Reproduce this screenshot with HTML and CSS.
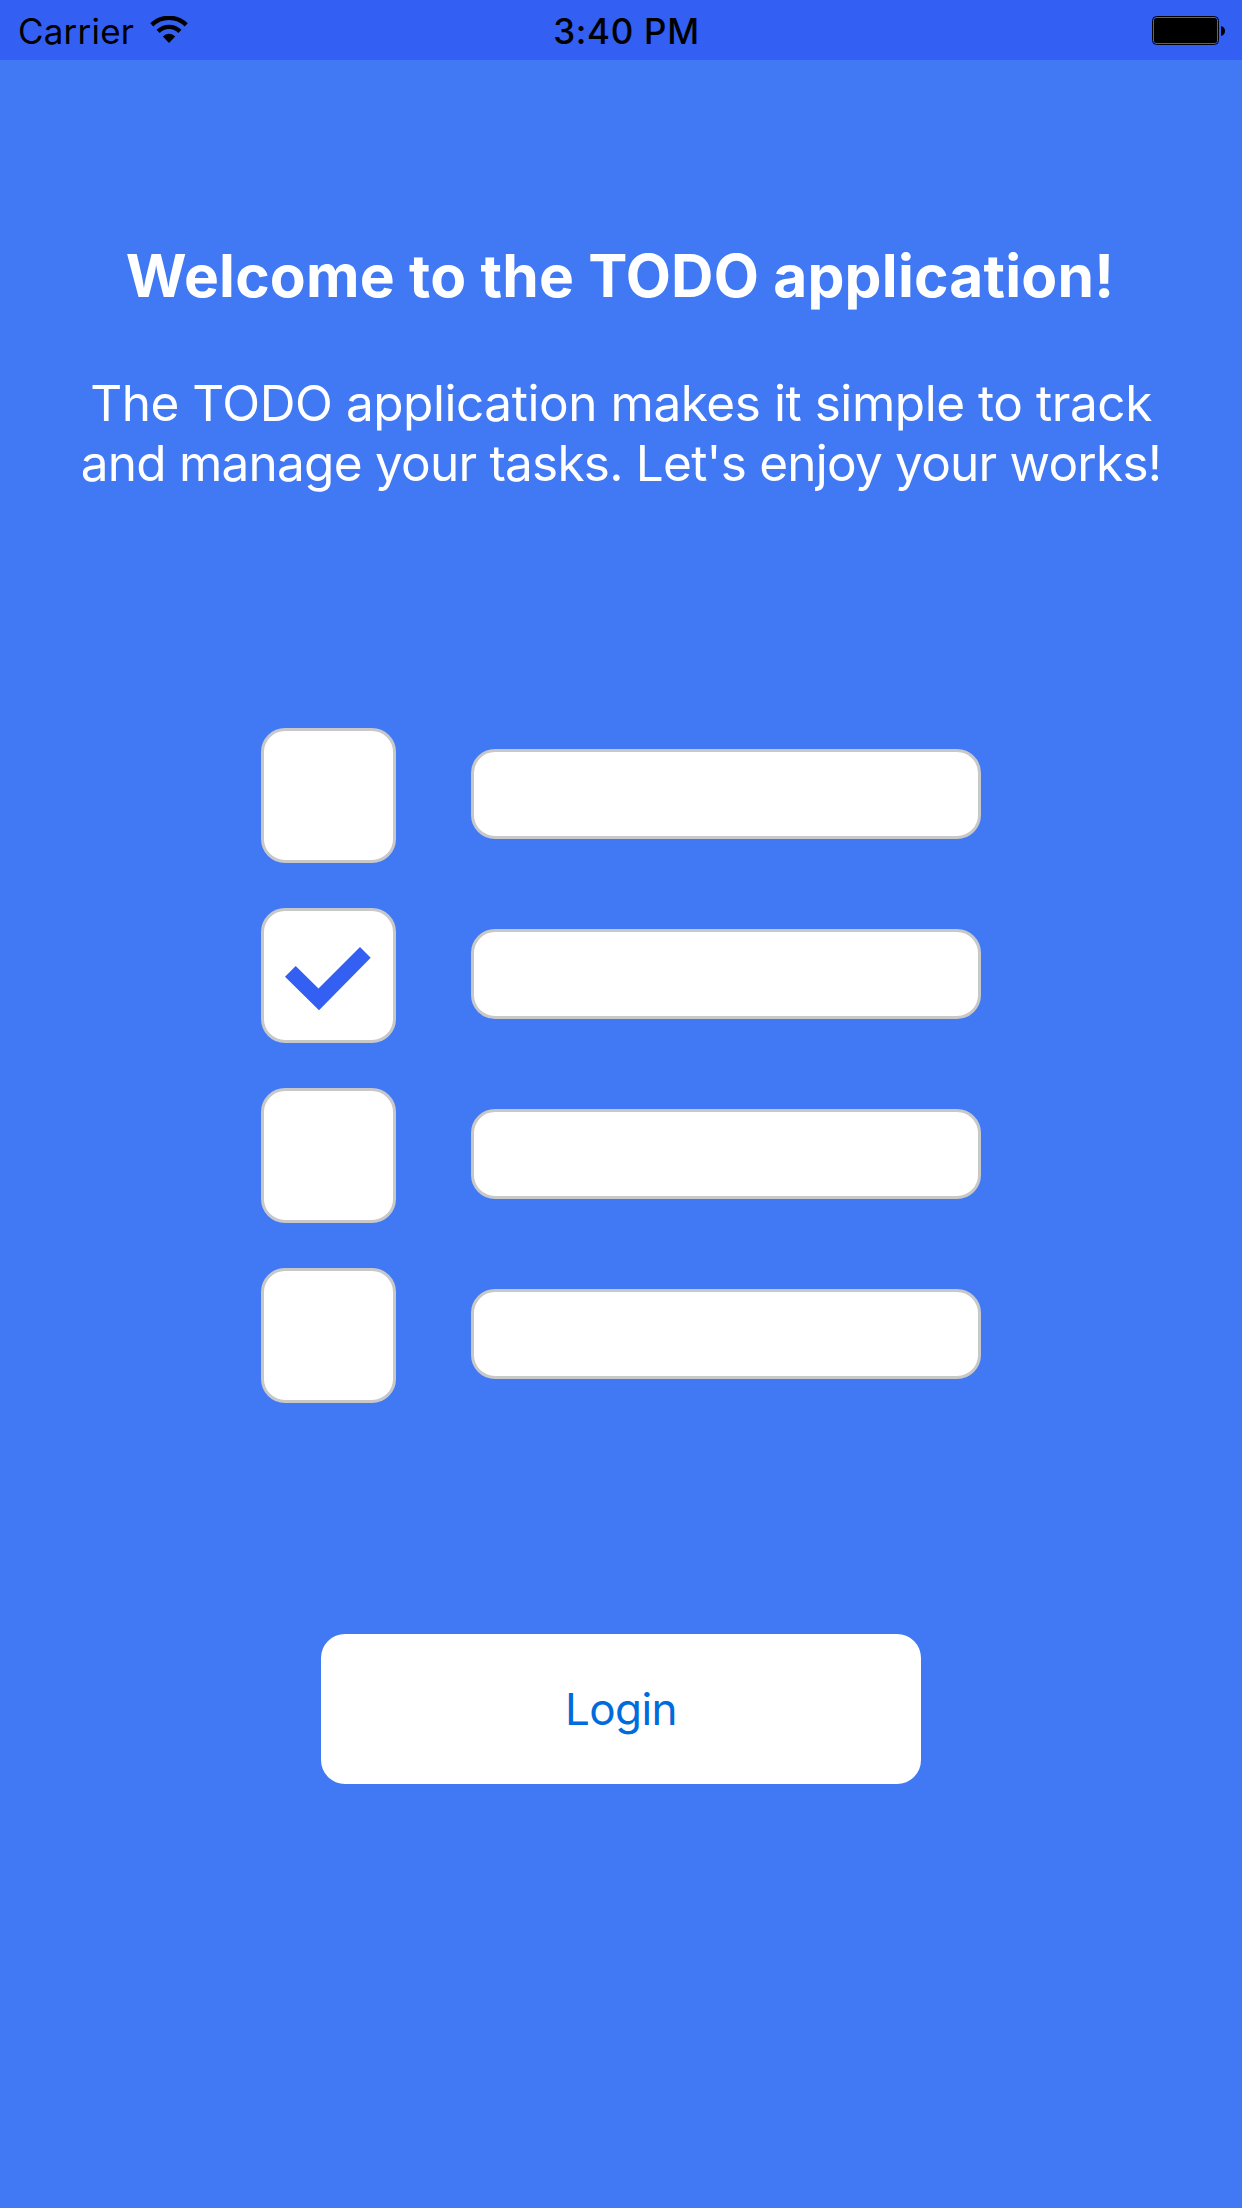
FILE: index.html
```
<!DOCTYPE html>
<html lang="en">
<head>
<meta charset="utf-8">
<title>TODO</title>
<link rel="stylesheet" href="styles.css">
</head>
<body>
<header class="status">
  <div class="status-left">
    <span class="carrier">Carrier</span>
    <svg class="wifi" width="38" height="28" viewBox="0 0 38 28">
      <path d="M1.8 8.9A24.4 24.4 0 0 1 36.2 8.9" fill="none" stroke="#000" stroke-width="4.4"/>
      <path d="M8.1 15.4A15.4 15.4 0 0 1 29.9 15.4" fill="none" stroke="#000" stroke-width="4.4"/>
      <path d="M12.8 20.4A8.8 8.8 0 0 1 25.2 20.4L19 27Z"/>
    </svg>
  </div>
  <span class="time">3:40 PM</span>
  <div class="status-right">
    <svg width="73" height="29" viewBox="0 0 73 29">
      <rect x=".5" y=".5" width="66" height="28" rx="4" fill="none" stroke="#000"/>
      <rect x="2" y="2" width="63" height="25" rx="2.5"/>
      <path d="M69 10Q73 11 73 15T69 20Z"/>
    </svg>
  </div>
</header>
<main class="welcome">
  <h1 class="title">Welcome to the TODO application!</h1>
  <p class="intro">
    <span class="line line-first">The TODO application makes it simple to track</span>
    <span class="line line-second">and manage your tasks. Let's enjoy your works!</span>
  </p>
  <ul class="tasks">
    <li class="task"><span class="box"></span><span class="bar"></span></li>
    <li class="task">
      <span class="box">
        <svg width="129" height="129" viewBox="3 3 129 129"><path d="M24 68.7L34.7 58L57.5 80.5L99 39L109.7 49.7L58 102.3Z" fill="#335ff2"/></svg>
      </span>
      <span class="bar"></span>
    </li>
    <li class="task"><span class="box"></span><span class="bar"></span></li>
    <li class="task"><span class="box"></span><span class="bar"></span></li>
  </ul>
  <button class="login" type="button">Login</button>
</main>
</body>
</html>
```
FILE: styles.css
```
* { box-sizing: border-box; }

body {
  margin: 0;
  min-height: 2208px;
  background: #4178f4;
  font-family: Inter, "Liberation Sans", sans-serif;
}

.status {
  display: grid;
  grid-template-columns: 1fr auto 1fr;
  height: 60px;
  padding: 0 17px 0 18px;
  background: #335ff2;
  color: #000;
  font-size: 35px;
  line-height: 62px;
}

.status-left { display: flex; }
.carrier { letter-spacing: 0.2px; }
.wifi { margin: 16px 0 0 15.6px; }
.time { margin-left: 10px; font-weight: 550; letter-spacing: 0.7px; }

.status-right {
  display: flex;
  justify-content: flex-end;
  padding-top: 16px;
}

.welcome {
  display: flex;
  flex-direction: column;
  align-items: center;
  padding-top: 180px;
}

.title {
  margin: 0;
  padding-right: 2px;
  color: #fff;
  font-size: 58.7px;
  font-weight: 700;
  line-height: 71px;
  letter-spacing: 0.19px;
  white-space: nowrap;
}

.intro {
  margin: 62px 0 0;
  color: #fff;
  font-size: 49.5px;
  line-height: 60px;
  text-align: center;
  white-space: nowrap;
}

.line { display: block; }
.line-first { letter-spacing: -0.45px; }
.line-second { letter-spacing: -0.77px; }

.tasks {
  display: flex;
  flex-direction: column;
  gap: 45px;
  width: 720px;
  margin: 235px 0 0;
  padding: 0;
  list-style: none;
}

.task {
  display: flex;
  justify-content: space-between;
}

.box,
.bar {
  border: 3px solid #c8c8c8;
  border-radius: 24px;
  background: #fff;
}

.box {
  display: flex;
  width: 135px;
  height: 135px;
}

.bar {
  width: 510px;
  height: 90px;
  margin-top: 21px;
}

.login {
  width: 600px;
  height: 150px;
  margin-top: 231px;
  padding: 0;
  border: 0;
  border-radius: 24px;
  background: #fff;
  color: #006bdb;
  font: 44px/150px Inter, "Liberation Sans", sans-serif;
  letter-spacing: -0.6px;
}
```
